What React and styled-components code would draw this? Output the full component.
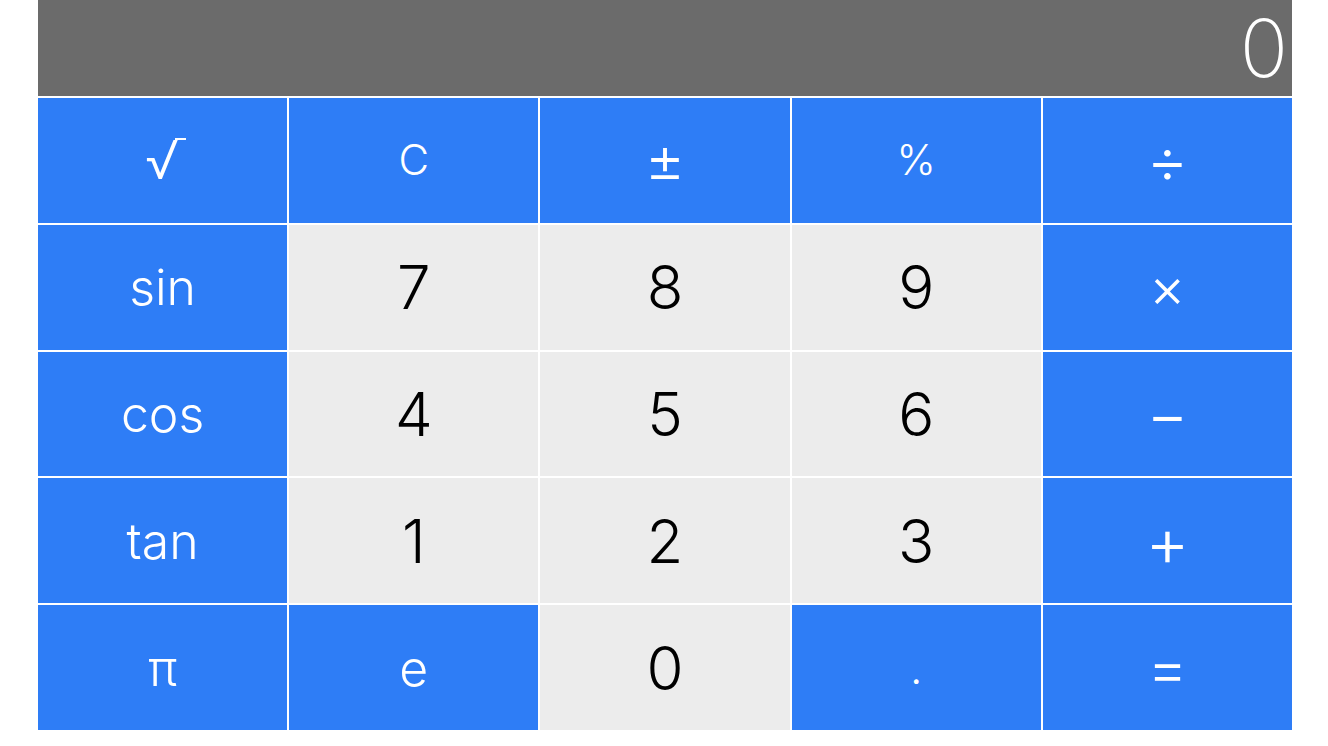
import React from "react";
import styled, { createGlobalStyle } from "styled-components";

const GlobalStyle = createGlobalStyle`
  html, body {
    margin: 0;
    padding: 0;
    background: #ffffff;
  }
  body {
    font-family: Inter, "Noto Sans", "Liberation Sans", sans-serif;
  }
`;

/* Whole calculator, white shows through as the thin lines between keys */
const Calculator = styled.div`
  width: 1254px;
  margin-left: 38px;
  display: flex;
  flex-direction: column;
  gap: 2px;
  background-color: #ffffff;
`;

/* Grey result strip on top */
const Display = styled.div`
  height: 96px;
  background-color: #6b6b6b;
  display: flex;
  align-items: center;
  justify-content: flex-end;
  padding-right: 4px;
  color: #ffffff;
  font-size: 80px;
  font-weight: 200;
  line-height: 1;
`;

const Keypad = styled.div`
  height: 632px;
  display: grid;
  grid-template-columns: repeat(5, 1fr);
  grid-template-rows: repeat(5, 1fr);
  gap: 2px;
`;

const Key = styled.button`
  border: none;
  margin: 0;
  padding: 0;
  display: flex;
  align-items: center;
  justify-content: center;
  font-family: Inter, "Noto Sans", "Liberation Sans", sans-serif;
  font-weight: 300;
  line-height: 1;
  cursor: pointer;
  background-color: ${(props) => (props.$digit ? "#ececec" : "#2e7df6")};
  color: ${(props) => (props.$digit ? "#000000" : "#ffffff")};
  font-size: ${(props) => props.$size}px;

  &:active {
    filter: brightness(0.92);
  }
`;

/* the little bar on top of the square-root sign */
const Radical = styled.span`
  display: inline-flex;
  align-items: flex-start;
  margin-left: 6px;

  &::after {
    content: "";
    width: 11px;
    margin-left: -4px;
    margin-top: 5px;
    border-top: 2px solid #ffffff;
  }
`;

const keys = [
  { label: "√", size: 54 },
  { label: "C", size: 42 },
  { label: "±", size: 62 },
  { label: "%", size: 42 },
  { label: "÷", size: 64 },
  { label: "sin", size: 50 },
  { label: "7", size: 60, digit: true },
  { label: "8", size: 60, digit: true },
  { label: "9", size: 60, digit: true },
  { label: "×", size: 56 },
  { label: "cos", size: 50 },
  { label: "4", size: 60, digit: true },
  { label: "5", size: 60, digit: true },
  { label: "6", size: 60, digit: true },
  { label: "−", size: 64 },
  { label: "tan", size: 50 },
  { label: "1", size: 60, digit: true },
  { label: "2", size: 60, digit: true },
  { label: "3", size: 60, digit: true },
  { label: "+", size: 68 },
  { label: "π", size: 50 },
  { label: "e", size: 50 },
  { label: "0", size: 60, digit: true },
  { label: ".", size: 44 },
  { label: "=", size: 62 },
];

export default function App() {
  return (
    <>
      <GlobalStyle />
      <Calculator>
        <Display>0</Display>
        <Keypad>
          {keys.map((k) => (
            <Key key={k.label} $digit={k.digit} $size={k.size}>
              {k.label === "√" ? <Radical>√</Radical> : k.label}
            </Key>
          ))}
        </Keypad>
      </Calculator>
    </>
  );
}
